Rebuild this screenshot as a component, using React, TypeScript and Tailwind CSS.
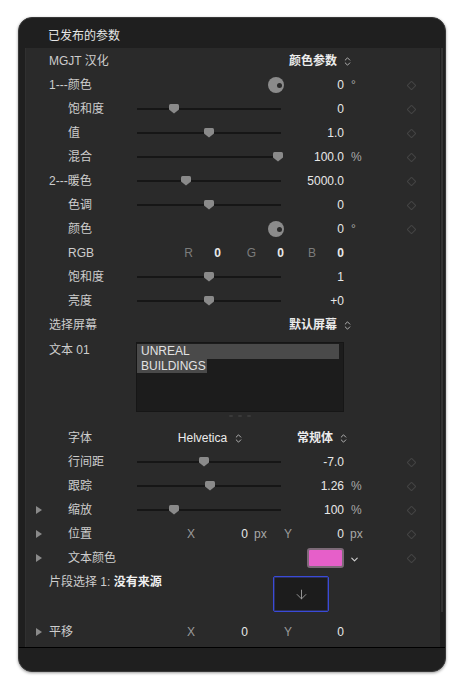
import { ArrowDown, ChevronDown, ChevronsUpDown } from 'lucide-react';

const FONT = { fontFamily: '"Liberation Sans", "Noto Sans CJK SC", sans-serif' };

const Tri = () => (
  <svg width="6" height="8" viewBox="0 0 6 8">
    <path d="M0 0 L6 4 L0 8 Z" fill="#8a8a8a" />
  </svg>
);

const Diamond = () => <div className="w-[7px] h-[7px] rotate-45 border border-[#444] rounded-[1px]" />;

const Slider = ({ pos }: { pos: number }) => (
  <div className="relative w-full h-full">
    <div className="absolute left-0 right-0 top-[11px] h-[2px] bg-[#161616]" />
    <svg
      className="absolute top-[7px] -ml-[5px]"
      style={{ left: `${pos}%` }}
      width="10"
      height="10"
      viewBox="0 0 10 10"
    >
      <path d="M0 1.5 Q0 0 1.5 0 H8.5 Q10 0 10 1.5 V5.5 L5 9.5 L0 5.5 Z" fill="#8a8a8a" />
    </svg>
  </div>
);

const Wheel = () => (
  <div className="w-full flex justify-end -mr-[3px]">
    <div className="w-4 h-4 rounded-full bg-[#8b8b8b] flex items-center justify-end pr-[2px] mr-[-3px]">
      <div className="w-[5px] h-[5px] rounded-full bg-[#2a2a2a]" />
    </div>
  </div>
);

const Popup = ({ text }: { text: string }) => (
  <span className="flex items-center gap-[5px] font-semibold text-[#ececec]">
    {text}
    <ChevronsUpDown size={11} strokeWidth={2} className="text-[#bdbdbd]" />
  </span>
);

const Row = ({
  label,
  indent,
  tri,
  control,
  value,
  unit,
  diamond,
}: {
  label: string;
  indent?: boolean;
  tri?: boolean;
  control?: React.ReactNode;
  value?: React.ReactNode;
  unit?: string;
  diamond?: boolean;
}) => (
  <div className="flex h-6 items-center">
    <div className="w-[23px] pl-[10px] flex items-center">{tri && <Tri />}</div>
    <div className={`w-[88px] text-[#cdcdcd] whitespace-nowrap ${indent ? 'pl-[19px]' : ''}`}>{label}</div>
    <div className="w-[144px] h-full flex items-center">{control}</div>
    <div className="w-[63px] text-right text-[#e8e8e8]">{value}</div>
    <div className="w-[30px] pl-[7px] text-[#a8a8a8]">{unit}</div>
    <div className="pl-[34px]">{diamond && <Diamond />}</div>
  </div>
);

const XY = ({ label, tri, x, y, px, diamond }: { label: string; tri?: boolean; x: string; y: string; px?: boolean; diamond?: boolean }) => (
  <div className="flex h-6 items-center">
    <div className="w-[23px] pl-[10px] flex items-center">{tri && <Tri />}</div>
    <div className={`w-[88px] text-[#cdcdcd] ${px ? 'pl-[19px]' : ''}`}>{label}</div>
    <div className="w-[144px] flex items-center">
      <span className="w-[58px] text-right text-[#9a9a9a]">X</span>
      <span className="w-[53px] text-right text-[#e8e8e8]">{x}</span>
      {px && <span className="pl-[6px] text-[#a8a8a8]">px</span>}
    </div>
    <div className="w-[93px] flex items-center">
      <span className="w-[11px] text-right text-[#9a9a9a]">Y</span>
      <span className="w-[52px] text-right text-[#e8e8e8]">{y}</span>
      {px && <span className="pl-[6px] text-[#a8a8a8]">px</span>}
    </div>
    <div className="pl-[34px]">{diamond && <Diamond />}</div>
  </div>
);

export default function App() {
  return (
    <div className="min-h-screen bg-white pt-[17px] pl-[18px] text-[12px]" style={FONT}>
      <div className="w-[428px] h-[655px] rounded-[14px] bg-[#1f1f1f] border border-[#383838] flex flex-col overflow-hidden shadow-[0_1px_3px_rgba(0,0,0,0.4)]">
        <div className="h-[30px] shrink-0 flex items-center pl-[29px] text-[#e6e6e6] pt-[6px]">已发布的参数</div>

        <div className="flex-1 flex">
          <div className="ml-[6px] w-[415px] bg-[#2a2a2a] border-l border-[#303030] pt-[1px]">
            <div className="flex h-6 items-center">
              <div className="w-[23px]" />
              <div className="w-[88px] text-[#cdcdcd]">MGJT 汉化</div>
              <div className="w-[237px] flex justify-end pr-[21px]">
                <Popup text="颜色参数" />
              </div>
            </div>
            <Row label="1---颜色" control={<Wheel />} value="0" unit="°" diamond />
            <Row label="饱和度" indent control={<Slider pos={26} />} value="0" diamond />
            <Row label="值" indent control={<Slider pos={50} />} value="1.0" diamond />
            <Row label="混合" indent control={<Slider pos={98} />} value="100.0" unit="%" diamond />
            <Row label="2---暖色" control={<Slider pos={34} />} value="5000.0" diamond />
            <Row label="色调" indent control={<Slider pos={50} />} value="0" diamond />
            <Row label="颜色" indent control={<Wheel />} value="0" unit="°" diamond />
            <div className="flex h-6 items-center">
              <div className="w-[23px]" />
              <div className="w-[88px] pl-[19px] text-[#cdcdcd]">RGB</div>
              <div className="flex w-[207px]">
                <span className="w-[56px] text-right text-[#7c7c7c]">R</span>
                <span className="w-[28px] text-right text-[#e8e8e8] font-semibold">0</span>
                <span className="w-[35px] text-right text-[#7c7c7c]">G</span>
                <span className="w-[28px] text-right text-[#e8e8e8] font-semibold">0</span>
                <span className="w-[32px] text-right text-[#7c7c7c]">B</span>
                <span className="w-[28px] text-right text-[#e8e8e8] font-semibold">0</span>
              </div>
            </div>
            <Row label="饱和度" indent control={<Slider pos={50} />} value="1" />
            <Row label="亮度" indent control={<Slider pos={50} />} value="+0" />
            <div className="flex h-6 items-center">
              <div className="w-[23px]" />
              <div className="w-[88px] text-[#cdcdcd]">选择屏幕</div>
              <div className="w-[237px] flex justify-end pr-[21px]">
                <Popup text="默认屏幕" />
              </div>
            </div>

            <div className="flex h-[89px]">
              <div className="w-[23px]" />
              <div className="w-[87px] pt-[5px] leading-4 text-[#cdcdcd]">文本 01</div>
              <div className="flex flex-col items-center">
                <div className="mt-[5px] w-[208px] h-[70px] bg-[#1c1c1c] border border-[#161616] text-[#e2e2e2] leading-[15px] pt-[1px]">
                  <div className="bg-[#4a4a4a] w-[202px] pl-[4px]">UNREAL</div>
                  <div>
                    <span className="bg-[#4a4a4a] pl-[4px] pr-[1px]">BUILDINGS</span>
                  </div>
                </div>
                <div className="flex gap-[5px] mt-[3px]">
                  <div className="w-[4px] h-[2px] rounded-full bg-[#3a3a3a]" />
                  <div className="w-[4px] h-[2px] rounded-full bg-[#3a3a3a]" />
                  <div className="w-[4px] h-[2px] rounded-full bg-[#3a3a3a]" />
                </div>
              </div>
            </div>

            <div className="flex h-6 items-center">
              <div className="w-[23px]" />
              <div className="w-[88px] pl-[19px] text-[#cdcdcd]">字体</div>
              <div className="w-[144px] flex justify-center pl-[4px]">
                <span className="flex items-center gap-[6px] text-[#ececec]">
                  Helvetica
                  <ChevronsUpDown size={11} strokeWidth={2} className="text-[#bdbdbd]" />
                </span>
              </div>
              <div className="w-[93px] flex justify-end pr-[25px]">
                <Popup text="常规体" />
              </div>
            </div>
            <Row label="行间距" indent control={<Slider pos={46.5} />} value="-7.0" diamond />
            <Row label="跟踪" indent control={<Slider pos={51} />} value="1.26" unit="%" diamond />
            <Row label="缩放" indent tri control={<Slider pos={26} />} value="100" unit="%" diamond />
            <XY label="位置" tri x="0" y="0" px diamond />
            <div className="flex h-6 items-center">
              <div className="w-[23px] pl-[10px] flex items-center">
                <Tri />
              </div>
              <div className="w-[88px] pl-[19px] text-[#cdcdcd] whitespace-nowrap">文本颜色</div>
              <div className="w-[144px]" />
              <div className="w-[93px] flex items-center pl-[26px]">
                <div className="w-[37px] h-[20px] rounded-[3px] border-2 border-[#7d6a78] bg-[#e65fc9]" />
                <ChevronDown size={11} strokeWidth={2.5} className="ml-[5px] mt-[3px] text-[#cfcfcf]" />
              </div>
              <div className="pl-[34px]">
                <Diamond />
              </div>
            </div>

            <div className="flex h-[50px] items-start">
              <div className="w-[23px]" />
              <div className="w-[224px] h-6 flex items-center text-[#cdcdcd] whitespace-nowrap">
                片段选择 1:&nbsp;<span className="font-semibold text-[#f0f0f0]">没有来源</span>
              </div>
              <div className="mt-[6px] w-[56px] h-[36px] rounded-[2px] border border-[#3a4ad8] bg-[#1c1c1c] shadow-[inset_0_0_0_1px_#2a2f5a] flex items-center justify-center">
                <ArrowDown size={15} strokeWidth={1.5} className="text-[#9c9c9c]" />
              </div>
            </div>

            <XY label="平移" tri x="0" y="0" />
          </div>
          <div className="w-[5px] flex justify-start">
            <div className="w-[2px] h-[564px] bg-[#333] ml-[1px]" />
          </div>
        </div>

        <div className="h-[24px] shrink-0 border-t border-black" />
      </div>
    </div>
  );
}
